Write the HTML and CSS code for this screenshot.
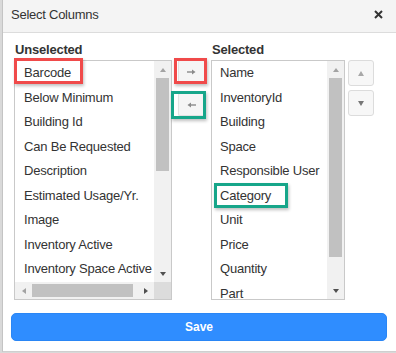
FILE: index.html
```html
<!DOCTYPE html>
<html>
<head>
<meta charset="utf-8">
<link rel="stylesheet" href="styles.css">
</head>
<body>
<div class="modal">
  <div class="header">
    <span class="title">Select Columns</span>
    <span class="close"><svg width="9" height="9" viewBox="0 0 9 9"><path d="M1 1 L8 8 M8 1 L1 8" stroke="#333" stroke-width="2" fill="none"/></svg></span>
  </div>
  <div class="body">
    <div class="grid">
      <div class="label">Unselected</div>
      <div></div>
      <div class="label">Selected</div>
      <div></div>

      <div class="listbox lb-left">
        <div class="items">
          <div class="item">Barcode</div>
          <div class="item">Below Minimum</div>
          <div class="item">Building Id</div>
          <div class="item">Can Be Requested</div>
          <div class="item">Description</div>
          <div class="item">Estimated Usage/Yr.</div>
          <div class="item">Image</div>
          <div class="item">Inventory Active</div>
          <div class="item">Inventory Space Active</div>
        </div>
        <div class="vscroll">
          <div class="sbtn"><span class="tri up dim"></span></div>
          <div class="vtrack"><div class="vthumb short"></div></div>
          <div class="sbtn"><span class="tri down"></span></div>
        </div>
        <div class="hscroll">
          <div class="sbtn"><span class="tri left dim"></span></div>
          <div class="htrack"><div class="hthumb"></div></div>
          <div class="sbtn"><span class="tri right"></span></div>
        </div>
        <div class="corner"></div>
        <div class="mark red mark-barcode"></div>
      </div>

      <div class="mid">
        <div class="mbtn"><svg width="9" height="6" viewBox="0 0 9 6"><path d="M0 3 H6" stroke="#8a8a8a" stroke-width="1.4"/><path d="M5 0.5 L8.5 3 L5 5.5 Z" fill="#8a8a8a"/></svg></div>
        <div class="mbtn"><svg width="9" height="6" viewBox="0 0 9 6"><path d="M3 3 H9" stroke="#8a8a8a" stroke-width="1.4"/><path d="M4 0.5 L0.5 3 L4 5.5 Z" fill="#8a8a8a"/></svg></div>
        <div class="mark red mark-add"></div>
        <div class="mark teal mark-remove"></div>
      </div>

      <div class="listbox lb-right">
        <div class="items">
          <div class="item">Name</div>
          <div class="item">InventoryId</div>
          <div class="item">Building</div>
          <div class="item">Space</div>
          <div class="item">Responsible User</div>
          <div class="item">Category</div>
          <div class="item">Unit</div>
          <div class="item">Price</div>
          <div class="item">Quantity</div>
          <div class="item">Part</div>
        </div>
        <div class="vscroll">
          <div class="sbtn"><span class="tri up dim"></span></div>
          <div class="vtrack"><div class="vthumb long"></div></div>
          <div class="sbtn"><span class="tri down"></span></div>
        </div>
        <div class="mark teal mark-category"></div>
      </div>

      <div class="order">
        <div class="obtn"><span class="otri oup"></span></div>
        <div class="obtn"><span class="otri odown"></span></div>
      </div>
    </div>
    <button class="save">Save</button>
  </div>
</div>
</body>
</html>
```

FILE: styles.css
```css
* { box-sizing: border-box; }
html, body { margin: 0; padding: 0; }
body {
  background: #d9d9d9;
  width: 396px;
  height: 353px;
  overflow: hidden;
  font-family: "Liberation Sans", Arial, sans-serif;
  color: #333;
}
.modal {
  margin-left: 2px;
  height: 352px;
  background: #fff;
  border-left: 1px solid #c4c4c4;
  border-bottom: 1px solid #cfcfcf;
}
.header {
  height: 33px;
  background: #f4f4f4;
  border-bottom: 1px solid #dcdcdc;
  display: flex;
  align-items: center;
  justify-content: space-between;
  padding: 0 13px 4px 8px;
}
.title { font-size: 13px; letter-spacing: -0.25px; }
.close { display: flex; }
.body { padding: 9px 9px 0 8px; }
.grid {
  display: grid;
  grid-template-columns: 158px 39px 134px 30px;
  grid-template-rows: 15px 240px;
  row-gap: 3px;
  margin-left: 3px;
}
.label {
  font-weight: bold;
  font-size: 13px;
  line-height: 15px;
  padding-left: 1px;
  letter-spacing: -0.2px;
}
.listbox {
  position: relative;
  border: 1px solid #c9c9c9;
  display: grid;
  grid-template-columns: 1fr 17px;
}
.lb-left { grid-template-rows: 1fr 17px; }
.lb-right { grid-template-rows: 1fr; }
.items {
  overflow: hidden;
  white-space: nowrap;
  font-size: 13px;
  letter-spacing: -0.2px;
}
.lb-left .items { padding-left: 9px; }
.lb-right .items { padding-left: 8px; }
.item { height: 24.5px; line-height: 24.5px; }
.vscroll {
  background: #f1f1f1;
  display: flex;
  flex-direction: column;
}
.sbtn {
  width: 17px;
  height: 17px;
  flex: none;
  display: flex;
  align-items: center;
  justify-content: center;
}
.vtrack { flex: 1; }
.vthumb { margin: 0 2px; background: #c1c1c1; }
.vthumb.short { height: 93px; }
.vthumb.long { height: 179px; }
.hscroll {
  background: #f1f1f1;
  display: flex;
}
.htrack { flex: 1; }
.hthumb { width: 101px; height: 13px; margin-top: 2px; background: #c1c1c1; }
.corner { background: #dcdcdc; }
.tri { width: 0; height: 0; border-style: solid; }
.tri.up { border-width: 0 3.5px 4px 3.5px; border-color: transparent transparent #505050 transparent; }
.tri.down { border-width: 4px 3.5px 0 3.5px; border-color: #505050 transparent transparent transparent; }
.tri.left { border-width: 3.5px 4px 3.5px 0; border-color: transparent #505050 transparent transparent; }
.tri.right { border-width: 3.5px 0 3.5px 4px; border-color: transparent transparent transparent #505050; }
.tri.up.dim { border-bottom-color: #a3a3a3; }
.tri.left.dim { border-right-color: #a3a3a3; }
.mid {
  position: relative;
  display: flex;
  flex-direction: column;
  align-items: center;
  gap: 10px;
}
.mbtn {
  width: 27px;
  height: 23px;
  background: #f5f5f5;
  border: 1px solid #e2e2e2;
  border-radius: 2px;
  box-shadow: 0 1px 1px rgba(0,0,0,0.08);
  display: flex;
  align-items: center;
  justify-content: center;
}
.order {
  padding-left: 3px;
  display: flex;
  flex-direction: column;
  gap: 4px;
}
.obtn {
  width: 26px;
  height: 26px;
  background: #f7f7f7;
  border: 1px solid #dcdcdc;
  border-radius: 3px;
  display: flex;
  align-items: center;
  justify-content: center;
}
.otri { width: 0; height: 0; border-style: solid; }
.oup { border-width: 0 3.5px 5px 3.5px; border-color: transparent transparent #a8a8a8 transparent; }
.odown { border-width: 5px 3.5px 0 3.5px; border-color: #777 transparent transparent transparent; }
.mark {
  position: absolute;
  border: 3px solid;
  box-shadow: 1px 2px 3px rgba(0,0,0,0.25);
  pointer-events: none;
}
.red { border-color: #f04a4a; }
.teal { border-color: #17a68a; }
.mark-barcode { left: -1px; top: -3px; width: 69px; height: 26px; }
.mark-add { left: 2px; top: -2px; width: 33px; height: 26px; }
.mark-remove { left: -1px; top: 31px; width: 35px; height: 28px; }
.mark-category { left: 2px; top: 122px; width: 74px; height: 25px; }
.save {
  display: block;
  width: 376px;
  height: 28px;
  margin-top: 13px;
  border: 1px solid #2a86f5;
  border-radius: 5px;
  background: #2f8dff;
  color: #fff;
  font-family: "Liberation Sans", Arial, sans-serif;
  font-weight: bold;
  font-size: 12px;
  padding: 0;
}
```
